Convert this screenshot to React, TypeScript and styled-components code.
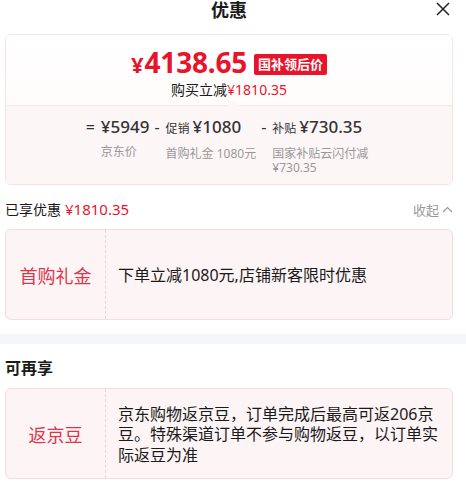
import React from "react";
import styled, { createGlobalStyle } from "styled-components";

const GlobalStyle = createGlobalStyle`
  html, body { margin: 0; padding: 0; background: #ffffff; }
  body {
    font-family: "Noto Sans", "Noto Sans CJK SC", sans-serif;
    color: #1a1a1a;
    -webkit-font-smoothing: antialiased;
  }
`;

const RED = "#e8142c";
const SOFT_RED = "#e0344a";

const Page = styled.div`
  width: 466px;
  height: 487px;
  overflow: hidden;
  display: flex;
  flex-direction: column;
`;

const Section = styled.div`
  display: flex;
  flex-direction: column;
  padding: 0 13px 0 5px;
`;

const Header = styled.div`
  position: relative;
  height: 34px;
  display: flex;
  justify-content: center;
`;

const Title = styled.div`
  font-size: 18px;
  font-weight: 700;
  line-height: 21px;
  color: #1a1a1a;
`;

const Close = styled.div`
  position: absolute;
  right: 3px;
  top: 2px;
  width: 14px;
  height: 14px;
  display: flex;
`;

const PriceCard = styled.div`
  border: 1px solid #f2e4e7;
  border-radius: 6px;
  overflow: hidden;
  display: flex;
  flex-direction: column;
`;

const PriceTop = styled.div`
  background: linear-gradient(#ffffff, #fffbfb);
  padding: 9px 0 6px;
  display: flex;
  flex-direction: column;
  align-items: center;
  border-bottom: 1px solid #f7e9eb;
`;

const PriceLine = styled.div`
  display: flex;
  align-items: center;
  height: 36px;
  line-height: 1;
`;

const Yen = styled.span`
  color: ${RED};
  font-size: 22px;
  font-weight: 700;
  margin-top: 4px;
  margin-right: 1px;
`;

const Amount = styled.span`
  color: ${RED};
  font-size: 28px;
  font-weight: 700;
  letter-spacing: -0.2px;
`;

const Badge = styled.span`
  margin-left: 7px;
  margin-top: 4px;
  background: ${RED};
  color: #ffffff;
  font-size: 13px;
  font-weight: 700;
  line-height: 21px;
  padding: 0 4px;
  border-radius: 2px;
`;

const SubLine = styled.div`
  margin-top: 1px;
  font-size: 14px;
  line-height: 18px;
  color: #1a1a1a;
`;

const RedText = styled.span`
  color: ${RED};
`;

const Breakdown = styled.div`
  position: relative;
  background: #fdf6f7;
  padding: 10px 0 9px;
  display: flex;
  justify-content: center;
  gap: 5px;
  &::before {
    content: "";
    position: absolute;
    left: 221px;
    top: -6px;
    border-left: 6px solid transparent;
    border-right: 6px solid transparent;
    border-bottom: 6px solid #fdf6f7;
  }
`;

const Term = styled.div`
  display: flex;
  align-items: flex-start;
`;

const Op = styled.span`
  font-size: 16px;
  line-height: 22px;
  color: #333333;
  padding-right: 6px;
`;

const TermBody = styled.div<{ $labelWidth?: number }>`
  display: flex;
  flex-direction: column;
  gap: 7px;
  max-width: ${(p) => (p.$labelWidth ? `${p.$labelWidth}px` : "none")};
`;

const Value = styled.div`
  font-size: 17px;
  font-weight: 500;
  line-height: 22px;
  color: #333333;
  white-space: nowrap;
`;

const Tag = styled.span`
  font-size: 12px;
  font-weight: 400;
  margin-right: 3px;
`;

const Label = styled.div`
  font-size: 12px;
  line-height: 14px;
  color: #999999;
`;

const SummaryRow = styled.div`
  height: 40px;
  margin-top: 4px;
  display: flex;
  align-items: center;
  justify-content: space-between;
`;

const SummaryText = styled.div`
  font-size: 14px;
  color: #1a1a1a;
`;

const SummaryAmount = styled.span`
  color: ${RED};
  font-size: 15px;
  margin-left: 4px;
`;

const Collapse = styled.div`
  display: flex;
  align-items: center;
  gap: 3px;
  font-size: 13px;
  color: #999999;
`;

const PromoCardBox = styled.div`
  height: 89px;
  border: 1px solid #f2dde1;
  border-radius: 6px;
  background: #fdf4f5;
  display: flex;
`;

const PromoLabel = styled.div`
  width: 99px;
  flex: none;
  display: flex;
  align-items: center;
  justify-content: center;
  font-size: 18px;
  color: ${SOFT_RED};
  border-right: 1px dashed #efd2d8;
`;

const PromoDesc = styled.div`
  flex: 1;
  display: flex;
  align-items: center;
  padding: 2px 8px 0 12px;
  font-size: 16px;
  line-height: 20.5px;
  color: #1a1a1a;
`;

const Band = styled.div`
  height: 10px;
  background: #f5f6f8;
  margin-top: 14px;
`;

const SectionTitle = styled.div`
  font-size: 16px;
  font-weight: 700;
  line-height: 24px;
  padding: 12px 0 8px;
  color: #1a1a1a;
`;

type PromoProps = { label: string; children: React.ReactNode };

const PromoCard = ({ label, children }: PromoProps) => (
  <PromoCardBox>
    <PromoLabel>{label}</PromoLabel>
    <PromoDesc>{children}</PromoDesc>
  </PromoCardBox>
);

export default function App() {
  return (
    <>
      <GlobalStyle />
      <Page>
        <Section>
          <Header>
            <Title>优惠</Title>
            <Close>
              <svg width="14" height="14" viewBox="0 0 14 14">
                <path d="M1 1 L13 13 M13 1 L1 13" stroke="#222" strokeWidth="1.5" fill="none" />
              </svg>
            </Close>
          </Header>
          <PriceCard>
            <PriceTop>
              <PriceLine>
                <Yen>¥</Yen>
                <Amount>4138.65</Amount>
                <Badge>国补领后价</Badge>
              </PriceLine>
              <SubLine>
                购买立减<RedText>¥1810.35</RedText>
              </SubLine>
            </PriceTop>
            <Breakdown>
              <Term>
                <Op>=</Op>
                <TermBody>
                  <Value>¥5949</Value>
                  <Label>京东价</Label>
                </TermBody>
              </Term>
              <Term>
                <Op>-</Op>
                <TermBody>
                  <Value>
                    <Tag>促销</Tag>¥1080
                  </Value>
                  <Label>首购礼金 1080元</Label>
                </TermBody>
              </Term>
              <Term>
                <Op>-</Op>
                <TermBody $labelWidth={100}>
                  <Value>
                    <Tag>补贴</Tag>¥730.35
                  </Value>
                  <Label>国家补贴云闪付减 ¥730.35</Label>
                </TermBody>
              </Term>
            </Breakdown>
          </PriceCard>
          <SummaryRow>
            <SummaryText>
              已享优惠<SummaryAmount>¥1810.35</SummaryAmount>
            </SummaryText>
            <Collapse>
              收起
              <svg width="11" height="7" viewBox="0 0 11 7">
                <path d="M1 6 L5.5 1.5 L10 6" stroke="#999" strokeWidth="1.2" fill="none" />
              </svg>
            </Collapse>
          </SummaryRow>
          <PromoCard label="首购礼金">下单立减1080元,店铺新客限时优惠</PromoCard>
        </Section>
        <Band />
        <Section>
          <SectionTitle>可再享</SectionTitle>
          <PromoCard label="返京豆">
            京东购物返京豆，订单完成后最高可返206京豆。特殊渠道订单不参与购物返豆，以订单实际返豆为准
          </PromoCard>
        </Section>
      </Page>
    </>
  );
}
